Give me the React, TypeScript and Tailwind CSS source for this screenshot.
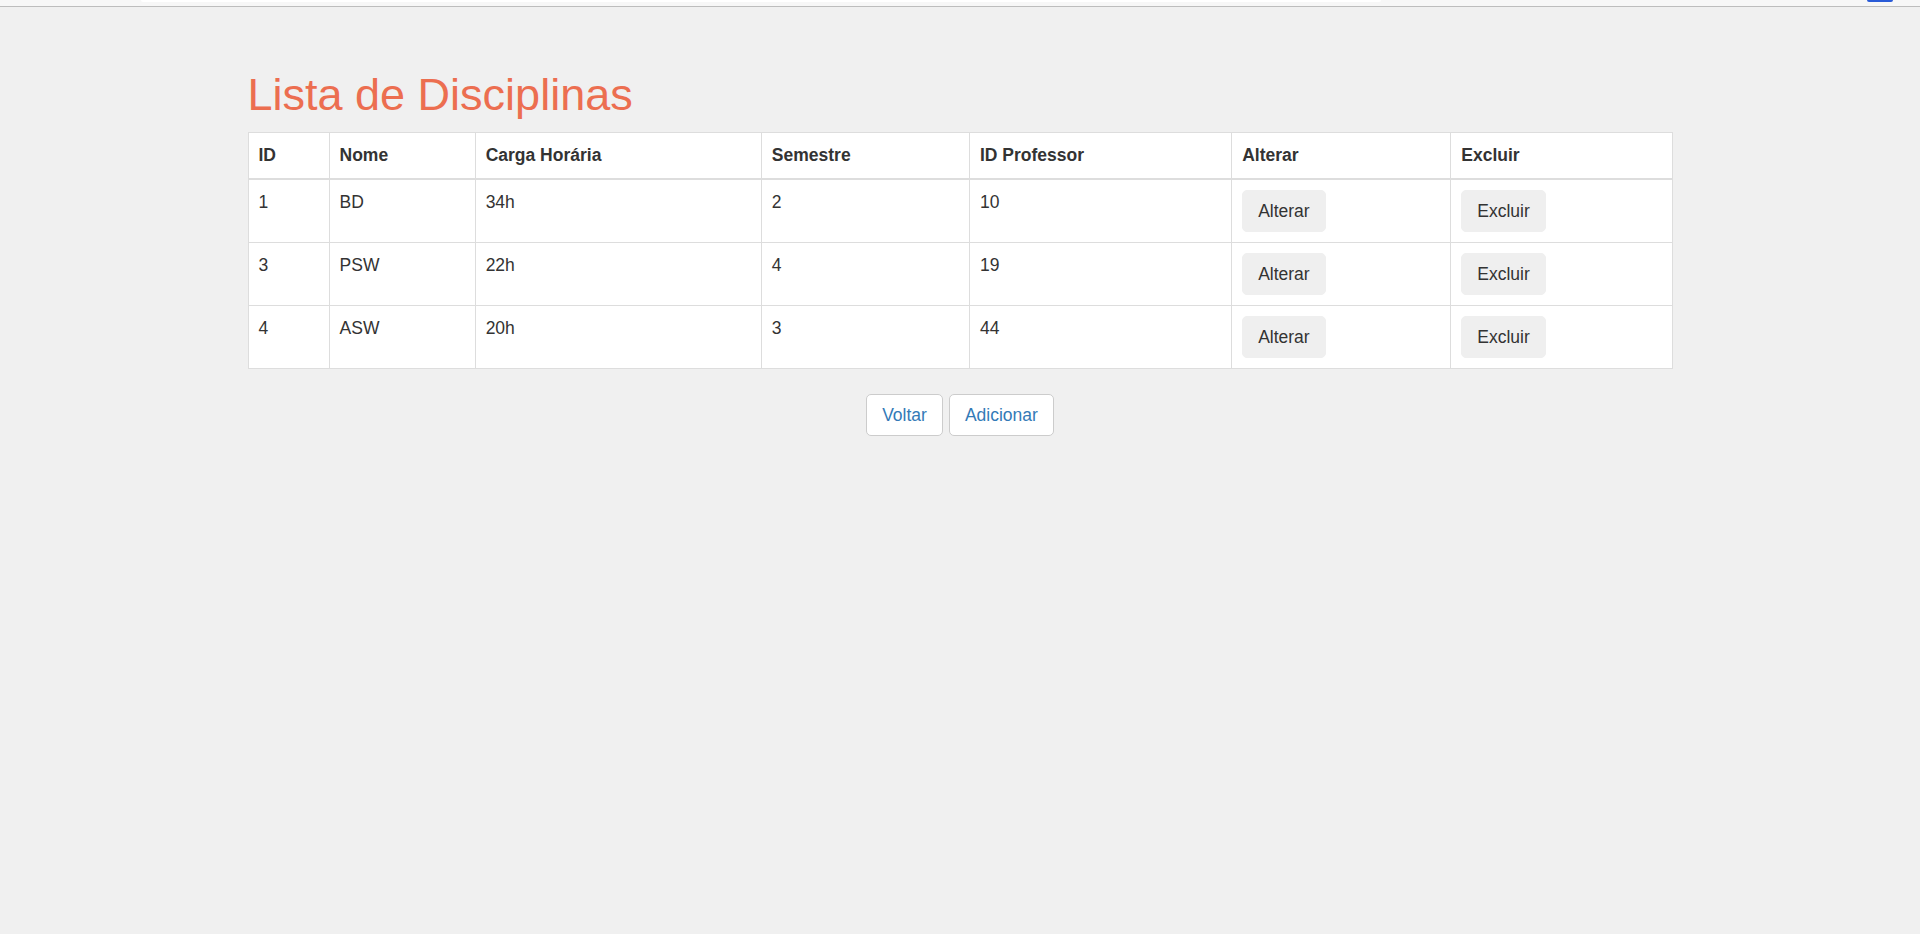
import React from "react";

const rows = [
  { id: "1", nome: "BD", carga: "34h", sem: "2", prof: "10" },
  { id: "3", nome: "PSW", carga: "22h", sem: "4", prof: "19" },
  { id: "4", nome: "ASW", carga: "20h", sem: "3", prof: "44" },
];

const headers = ["ID", "Nome", "Carga Horária", "Semestre", "ID Professor", "Alterar", "Excluir"];
const widths = [81, 146, 286, 208, 262, 219, 221];

export default function App() {
  return (
    <div className="min-h-[934px] bg-[#f0f0f0] font-['Liberation_Sans',Arial,sans-serif] text-[17.5px] text-[#333]">
      <div className="relative h-[7px] bg-[#f7f7f7] border-b border-[#bdbdbd]">
        <div className="absolute left-[141px] top-0 h-[2px] w-[1240px] rounded-b bg-white" />
        <div className="absolute left-[1867px] top-0 h-[2px] w-[26px] rounded-b-full bg-[#2a5bd7]" />
      </div>
      <div className="mx-auto w-[1425px] pt-[63px]">
        <h1 className="mb-[12.5px] text-[45px] font-normal leading-[49.5px] text-[#ec6e50]">
          Lista de Disciplinas
        </h1>
        <table className="w-full table-fixed border-collapse border border-[#ddd] bg-white">
          <colgroup>
            {widths.map((w, i) => (
              <col key={i} style={{ width: w }} />
            ))}
          </colgroup>
          <thead>
            <tr>
              {headers.map((h) => (
                <th
                  key={h}
                  className="border border-b-2 border-[#ddd] p-[10px] text-left align-bottom font-bold leading-[25px]"
                >
                  {h}
                </th>
              ))}
            </tr>
          </thead>
          <tbody>
            {rows.map((r) => (
              <tr key={r.id}>
                <td className="border border-[#ddd] p-[10px] align-top leading-[25px]">{r.id}</td>
                <td className="border border-[#ddd] p-[10px] align-top leading-[25px]">{r.nome}</td>
                <td className="border border-[#ddd] p-[10px] align-top leading-[25px]">{r.carga}</td>
                <td className="border border-[#ddd] p-[10px] align-top leading-[25px]">{r.sem}</td>
                <td className="border border-[#ddd] p-[10px] align-top leading-[25px]">{r.prof}</td>
                <td className="border border-[#ddd] p-[10px] align-top leading-[25px]">
                  <button className="flex h-[42px] items-center rounded-[5px] border border-[#efefef] bg-[#efefef] px-[15px] text-[17.5px] text-[#333]">
                    Alterar
                  </button>
                </td>
                <td className="border border-[#ddd] p-[10px] align-top leading-[25px]">
                  <button className="flex h-[42px] items-center rounded-[5px] border border-[#efefef] bg-[#efefef] px-[15px] text-[17.5px] text-[#333]">
                    Excluir
                  </button>
                </td>
              </tr>
            ))}
          </tbody>
        </table>
        <div className="mt-[25px] flex justify-center gap-[6px]">
          <button className="flex h-[41.5px] items-center rounded-[5px] border border-[#ccc] bg-white px-[15px] text-[17.5px] text-[#337ab7]">
            Voltar
          </button>
          <button className="flex h-[41.5px] items-center rounded-[5px] border border-[#ccc] bg-white px-[15px] text-[17.5px] text-[#337ab7]">
            Adicionar
          </button>
        </div>
      </div>
    </div>
  );
}
